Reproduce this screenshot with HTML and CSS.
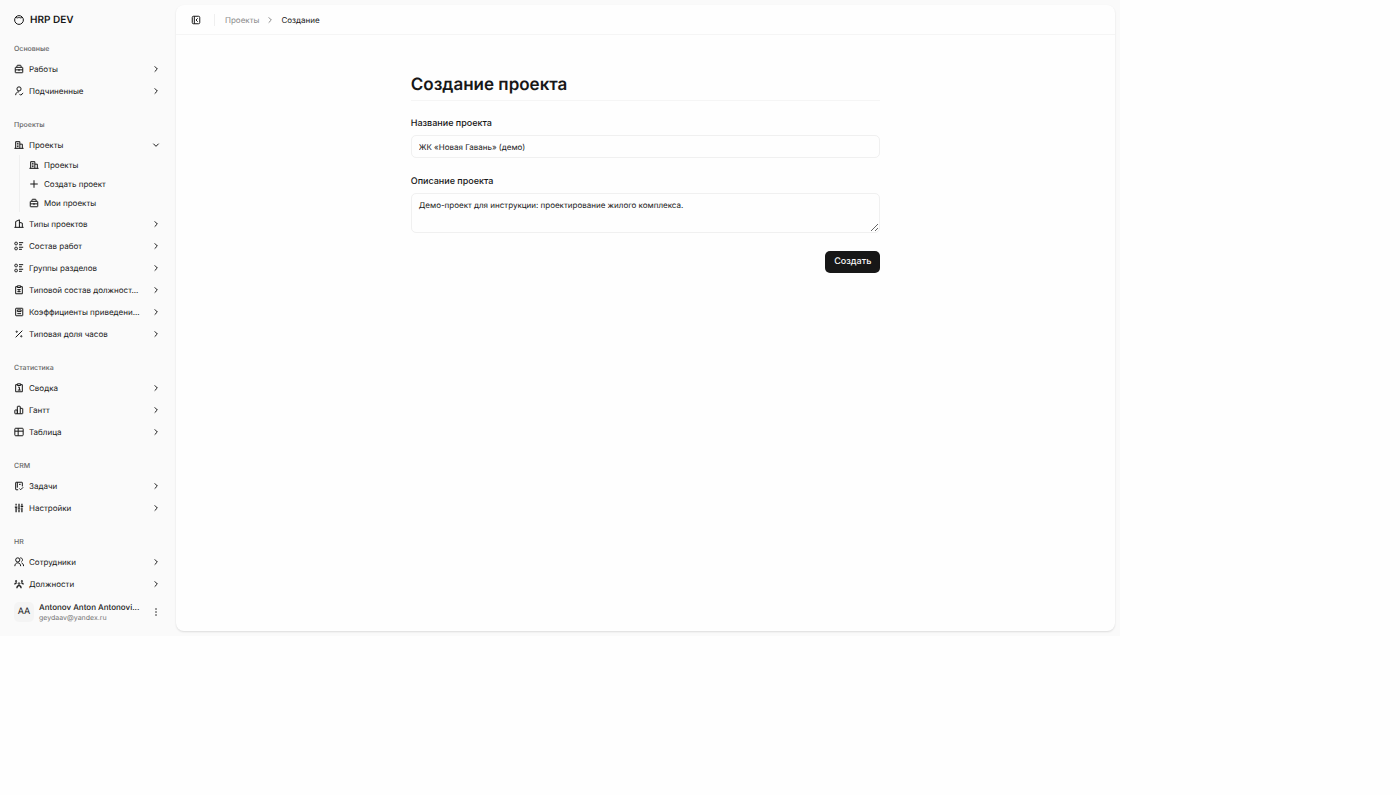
FILE: index.html
```html
<!DOCTYPE html>
<html lang="ru">
<head>
    <meta charset="UTF-8">
    <meta name="viewport" content="width=device-width, initial-scale=1.0">
    <title>Создание проекта</title>
    <link rel="stylesheet" href="styles.css">
</head>
<body>
    <!-- Иконки -->
    <svg class="sprite" aria-hidden="true">
        <symbol id="logo" viewBox="0 0 24 24"><circle cx="12" cy="12" r="10.500"/><path d="M5 6c3 2 5 0 7 0s4 2 7 0"/></symbol>
        <symbol id="briefcase" viewBox="0 0 24 24"><path d="M7 8V5a2 2 0 0 1 2-2h6a2 2 0 0 1 2 2v3M4 8h16a1 1 0 0 1 1 1v11a1 1 0 0 1-1 1H4a1 1 0 0 1-1-1V9a1 1 0 0 1 1-1zM3 14h18M12 12v5"/></symbol>
        <symbol id="user" viewBox="0 0 24 24"><circle cx="12" cy="7" r="5"/><path d="M4 22c0-5 3-8 8-8M13 19l3 3 6-5"/></symbol>
        <symbol id="building" viewBox="0 0 24 24"><path d="M1 20h22M4 20V4h10v16M14 10h6v10M7 8h4M7 12h4M7 16h4"/></symbol>
        <symbol id="tower" viewBox="0 0 24 24"><path d="M1 20h22M4 20V6l9-4v18M13 8l7 2v10"/></symbol>
        <symbol id="list" viewBox="0 0 24 24"><rect x="2" y="3" width="6" height="6" rx="2"/><rect x="2" y="15" width="6" height="6" rx="2"/><path d="M12 4h10M12 9h7M12 15h10M12 20h7"/></symbol>
        <symbol id="clipboard" viewBox="0 0 24 24"><path d="M8 4H4v17h16V4h-4M8 2h8v4H8zM8 11h8M8 16h8M12 11v6"/></symbol>
        <symbol id="calculator" viewBox="0 0 24 24"><rect x="4" y="3" width="17" height="18" rx="1"/><path d="M8 7h9v4H8zM8 16h9"/></symbol>
        <symbol id="percent" viewBox="0 0 24 24"><path d="M20 4 4 20"/><circle cx="6.500" cy="6.500" r="1.500"/><circle cx="17.500" cy="17.500" r="1.500"/></symbol>
        <symbol id="summary" viewBox="0 0 24 24"><path d="M8 4H4v17h16V4h-4M8 2h8v4H8zM10 10h3v7M9 17h7"/></symbol>
        <symbol id="chart" viewBox="0 0 24 24"><path d="M8 21H3a1 1 0 0 1-1-1v-7a1 1 0 0 1 1-1h5zM8 21V4a1 1 0 0 1 1-1h5a1 1 0 0 1 1 1v17zM15 8h5a1 1 0 0 1 1 1v11a1 1 0 0 1-1 1h-5"/></symbol>
        <symbol id="table" viewBox="0 0 24 24"><rect x="2" y="3" width="20" height="18" rx="2"/><path d="M2 10h20M10 3v18"/></symbol>
        <symbol id="task" viewBox="0 0 24 24"><path d="M20 13V4a1 1 0 0 0-1-1H5a1 1 0 0 0-1 1v16a1 1 0 0 0 1 1h5M8 3v13M12 8h4M13 18l3 3 6-6"/></symbol>
        <symbol id="sliders" viewBox="0 0 24 24"><path d="M5 2v4M5 11v11M12 2v10M12 17v5M19 2v4M19 11v11M2 10h6M9 14h6M16 8h6" stroke-width="3"/></symbol>
        <symbol id="people" viewBox="0 0 24 24"><circle cx="9" cy="7" r="5"/><path d="M2 22c0-5 3-8 7-8s7 3 7 8M15 2c6 0 7 7 3 9M18 14c3 1 5 4 5 8"/></symbol>
        <symbol id="team" viewBox="0 0 24 24"><circle cx="12" cy="11" r="2"/><circle cx="5" cy="5" r="1.500"/><circle cx="19" cy="5" r="1.500"/><path d="M7 22c0-4 2-6 5-6s5 2 5 6M2 13c0-3 2-4 5-4M22 13c0-3-2-4-5-4" stroke-width="3"/></symbol>
        <symbol id="plus" viewBox="0 0 24 24"><path d="M12 3v18M3 12h18"/></symbol>
        <symbol id="panel" viewBox="0 0 24 24"><rect x="3" y="3" width="18" height="18" rx="3"/><path d="M8 3v18M16 8l-4 4 4 4"/></symbol>
        <symbol id="right" viewBox="0 0 24 24"><path d="m8 4 8 8-8 8"/></symbol>
        <symbol id="down" viewBox="0 0 24 24"><path d="m4 8 8 8 8-8"/></symbol>
        <symbol id="dots" viewBox="0 0 24 24"><circle cx="12" cy="3" r="1"/><circle cx="12" cy="12" r="1"/><circle cx="12" cy="21" r="1"/></symbol>
    </svg>

    <div class="app">
        <aside class="sidebar">
            <a class="brand" href="#"><svg class="icon"><use href="#logo"/></svg>HRP DEV</a>

            <nav class="nav">
                <section class="group">
                    <h2 class="group-title">Основные</h2>
                    <ul class="menu">
                        <li><button class="row"><svg class="icon"><use href="#briefcase"/></svg><span class="text">Работы</span><svg class="chevron"><use href="#right"/></svg></button></li>
                        <li><button class="row"><svg class="icon"><use href="#user"/></svg><span class="text">Подчиненные</span><svg class="chevron"><use href="#right"/></svg></button></li>
                    </ul>
                </section>

                <section class="group">
                    <h2 class="group-title">Проекты</h2>
                    <ul class="menu">
                        <li>
                            <button class="row"><svg class="icon"><use href="#building"/></svg><span class="text">Проекты</span><svg class="chevron"><use href="#down"/></svg></button>
                            <ul class="submenu">
                                <li><a class="subrow" href="#"><svg class="icon"><use href="#building"/></svg>Проекты</a></li>
                                <li><a class="subrow" href="#"><svg class="icon"><use href="#plus"/></svg>Создать проект</a></li>
                                <li><a class="subrow" href="#"><svg class="icon"><use href="#briefcase"/></svg>Мои проекты</a></li>
                            </ul>
                        </li>
                        <li><button class="row"><svg class="icon"><use href="#tower"/></svg><span class="text">Типы проектов</span><svg class="chevron"><use href="#right"/></svg></button></li>
                        <li><button class="row"><svg class="icon"><use href="#list"/></svg><span class="text">Состав работ</span><svg class="chevron"><use href="#right"/></svg></button></li>
                        <li><button class="row"><svg class="icon"><use href="#list"/></svg><span class="text">Группы разделов</span><svg class="chevron"><use href="#right"/></svg></button></li>
                        <li><button class="row"><svg class="icon"><use href="#clipboard"/></svg><span class="text">Типовой состав должност...</span><svg class="chevron"><use href="#right"/></svg></button></li>
                        <li><button class="row"><svg class="icon"><use href="#calculator"/></svg><span class="text">Коэффициенты приведени...</span><svg class="chevron"><use href="#right"/></svg></button></li>
                        <li><button class="row"><svg class="icon"><use href="#percent"/></svg><span class="text">Типовая доля часов</span><svg class="chevron"><use href="#right"/></svg></button></li>
                    </ul>
                </section>

                <section class="group">
                    <h2 class="group-title">Статистика</h2>
                    <ul class="menu">
                        <li><button class="row"><svg class="icon"><use href="#summary"/></svg><span class="text">Сводка</span><svg class="chevron"><use href="#right"/></svg></button></li>
                        <li><button class="row"><svg class="icon"><use href="#chart"/></svg><span class="text">Гантт</span><svg class="chevron"><use href="#right"/></svg></button></li>
                        <li><button class="row"><svg class="icon"><use href="#table"/></svg><span class="text">Таблица</span><svg class="chevron"><use href="#right"/></svg></button></li>
                    </ul>
                </section>

                <section class="group">
                    <h2 class="group-title">CRM</h2>
                    <ul class="menu">
                        <li><button class="row"><svg class="icon"><use href="#task"/></svg><span class="text">Задачи</span><svg class="chevron"><use href="#right"/></svg></button></li>
                        <li><button class="row"><svg class="icon"><use href="#sliders"/></svg><span class="text">Настройки</span><svg class="chevron"><use href="#right"/></svg></button></li>
                    </ul>
                </section>

                <section class="group">
                    <h2 class="group-title">HR</h2>
                    <ul class="menu">
                        <li><button class="row"><svg class="icon"><use href="#people"/></svg><span class="text">Сотрудники</span><svg class="chevron"><use href="#right"/></svg></button></li>
                        <li><button class="row"><svg class="icon"><use href="#team"/></svg><span class="text">Должности</span><svg class="chevron"><use href="#right"/></svg></button></li>
                    </ul>
                </section>
            </nav>

            <button class="profile">
                <span class="avatar">AA</span>
                <span class="person">
                    <span class="person-name">Antonov Anton Antonovi...</span>
                    <span class="person-mail">geydaav@yandex.ru</span>
                </span>
                <svg class="chevron"><use href="#dots"/></svg>
            </button>
        </aside>

        <main class="main">
            <header class="topbar">
                <button class="toggle" aria-label="Меню"><svg class="icon"><use href="#panel"/></svg></button>
                <nav class="crumbs">
                    <a href="#">Проекты</a>
                    <svg class="chevron"><use href="#right"/></svg>
                    <span class="current">Создание</span>
                </nav>
            </header>

            <form class="form">
                <h1 class="title">Создание проекта</h1>
                <div class="field">
                    <label for="name">Название проекта</label>
                    <input type="text" id="name" value="ЖК «Новая Гавань» (демо)">
                </div>
                <div class="field">
                    <label for="description">Описание проекта</label>
                    <textarea id="description">Демо-проект для инструкции: проектирование жилого комплекса.</textarea>
                </div>
                <button class="submit" type="submit">Создать</button>
            </form>
        </main>
    </div>
</body>
</html>
```
FILE: styles.css
```css
* {
    box-sizing: border-box;
}

body {
    margin: 0;
    background-color: #fefefe;
    color: #171717;
    font-family: Inter, "Liberation Sans", sans-serif;
    font-size: 8px;
    line-height: 12px;
    text-rendering: geometricPrecision;
}

button, input, textarea {
    font: inherit;
    color: inherit;
    text-rendering: inherit;
}

button {
    border: none;
    background: none;
    cursor: pointer;
}

a {
    color: inherit;
    text-decoration: none;
}

ul {
    list-style: none;
    margin: 0;
    padding: 0;
}

.sprite {
    display: none;
}

.icon, .chevron {
    flex: none;
    width: 10px;
    height: 10px;
    fill: none;
    stroke: currentColor;
    stroke-width: 2.4;
}

.chevron {
    width: 8px;
    height: 8px;
    stroke-width: 3;
}

.app {
    display: flex;
    width: 80%;
    height: 80vh;
    padding: 5px 5px 5px 0;
    background-color: #fafafa;
}

/* Боковое меню */
.sidebar {
    display: flex;
    flex-direction: column;
    flex: none;
    width: 176px;
    padding: 0 14px;
}

.brand {
    display: flex;
    align-items: center;
    gap: 6px;
    height: 29px;
    font-size: 10px;
    font-weight: 600;
}

.nav {
    flex: 1;
    min-height: 0;
    padding-top: 6px;
    overflow: hidden;
}

.group {
    padding-bottom: 15px;
}

.group-title {
    margin: 0;
    height: 19px;
    padding-top: 3px;
    color: #666;
    font-size: 7px;
    font-weight: 500;
}

.menu {
    display: flex;
    flex-direction: column;
    gap: 2px;
}

.row {
    display: flex;
    align-items: center;
    gap: 5px;
    width: 100%;
    height: 20px;
    padding: 0 2px 0 0;
    text-align: left;
}

.text {
    flex: 1;
    white-space: nowrap;
}

.submenu {
    margin-left: 5px;
    padding-left: 9px;
    border-left: 1px solid #efefef;
}

.subrow {
    display: flex;
    align-items: center;
    gap: 5px;
    height: 19px;
}

.profile {
    display: flex;
    align-items: center;
    gap: 5px;
    height: 38px;
    padding: 0 2px 0 0;
    text-align: left;
}

.avatar {
    display: flex;
    align-items: center;
    justify-content: center;
    flex: none;
    width: 20px;
    height: 20px;
    border-radius: 5px;
    background-color: #f4f4f4;
    font-size: 9px;
}

.person {
    flex: 1;
    min-width: 0;
}

.person-name, .person-mail {
    display: block;
    white-space: nowrap;
    line-height: 11px;
}

.person-name {
    font-weight: 500;
}

.person-mail {
    color: #737373;
    font-size: 7px;
    line-height: 10px;
}

/* Основная область */
.main {
    flex: 1;
    min-width: 0;
    border-radius: 8px;
    background-color: #fefefe;
    box-shadow: 0 1px 2px rgba(0, 0, 0, 0.12);
}

.topbar {
    display: flex;
    align-items: center;
    height: 30px;
    padding: 0 15px;
    border-bottom: 1px solid #f5f5f5;
}

.toggle {
    display: flex;
    padding: 0;
}

.crumbs {
    display: flex;
    align-items: center;
    gap: 7px;
    margin-left: 13px;
    padding-left: 10px;
    border-left: 1px solid #efefef;
    color: #8a8a8a;
}

.current {
    color: #171717;
}

.form {
    display: flex;
    flex-direction: column;
    width: 50%;
    margin: 0 auto;
    padding-top: 39px;
}

.title {
    margin: 0 0 17px;
    padding-bottom: 4px;
    border-bottom: 1px solid #f5f5f5;
    font-size: 17px;
    font-weight: 600;
    line-height: 22px;
}

.field {
    display: flex;
    flex-direction: column;
    gap: 5px;
    margin-bottom: 18px;
}

.field label {
    font-size: 9px;
    font-weight: 500;
}

.field input, .field textarea {
    width: 100%;
    height: 23px;
    padding: 0 7px;
    border: 1px solid #f0f0f0;
    border-radius: 5px;
    background-color: #fefefe;
    outline: none;
}

.field textarea {
    display: block;
    height: 40px;
    padding: 5px 7px;
    resize: vertical;
}

.submit {
    align-self: flex-end;
    height: 22px;
    padding: 0 9px;
    border-radius: 5px;
    background-color: #171717;
    color: #fafafa;
    font-size: 9px;
    font-weight: 500;
}
```
